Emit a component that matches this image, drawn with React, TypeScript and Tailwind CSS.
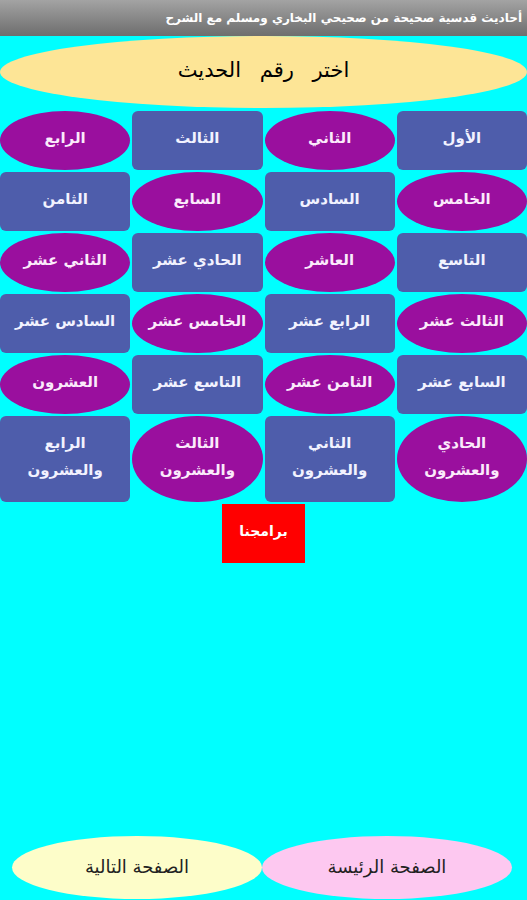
import React from "react";

const items = [
  "الأول", "الثاني", "الثالث", "الرابع",
  "الخامس", "السادس", "السابع", "الثامن",
  "التاسع", "العاشر", "الحادي عشر", "الثاني عشر",
  "الثالث عشر", "الرابع عشر", "الخامس عشر", "السادس عشر",
  "السابع عشر", "الثامن عشر", "التاسع عشر", "العشرون",
  "الحادي والعشرون", "الثاني والعشرون", "الثالث والعشرون", "الرابع والعشرون",
];

const font = { fontFamily: '"DejaVu Sans", "Noto Sans", sans-serif' };

export default function App() {
  return (
    <div className="w-[527px] h-[900px] bg-[#00ffff] flex flex-col overflow-hidden" style={font} dir="rtl">
      <div className="h-[36px] bg-gradient-to-b from-[#a3a3a3] to-[#6e6e6e] flex items-center px-[5px]">
        <span className="text-white text-[12px] font-bold leading-none">أحاديث قدسية صحيحة من صحيحي البخاري ومسلم مع الشرح</span>
      </div>
      <div className="h-[72px] bg-[#fde596] rounded-[50%] flex items-center justify-center pb-[2px]">
        <span className="text-black text-[21px] [word-spacing:12px]">اختر رقم الحديث</span>
      </div>
      <div className="mt-[3px] grid grid-cols-4 gap-[2px] grid-rows-[59px_59px_59px_59px_59px_86px]">
        {items.map((t, i) => {
          const row = Math.floor(i / 4);
          const col = i % 4;
          const rect = (row + col) % 2 === 0;
          const parts = row === 5 ? t.split(" ") : [t];
          return (
            <div
              key={i}
              className={
                rect
                  ? "bg-[#4e5dab] rounded-[6px] flex flex-col items-center justify-center text-[#f2f2ff] text-[15px] font-bold leading-[27px] pb-[4px]"
                  : "bg-[#9a0f9e] rounded-[50%] flex flex-col items-center justify-center text-[#fbeafb] text-[15px] font-bold leading-[27px] pb-[4px]"
              }
            >
              {parts.map((p, j) => (
                <span key={j}>{p}</span>
              ))}
            </div>
          );
        })}
      </div>
      <div className="flex justify-center mt-[2px]">
        <div className="w-[83px] h-[59px] bg-[#ff0000] flex items-center justify-center text-white text-[14px] font-bold pb-[4px]">
          برامجنا
        </div>
      </div>
      <div className="mt-auto flex pr-[15px] pl-[12px] h-[63px] mb-[1px]" dir="ltr">
        <div className="flex-1 bg-[#fdfdc9] rounded-[50%] flex items-center justify-center text-[#222] text-[18px] pb-[3px]">
          الصفحة التالية
        </div>
        <div className="flex-1 bg-[#fdc8f0] rounded-[50%] flex items-center justify-center text-[#222] text-[18px] pb-[3px]">
          الصفحة الرئيسة
        </div>
      </div>
    </div>
  );
}
